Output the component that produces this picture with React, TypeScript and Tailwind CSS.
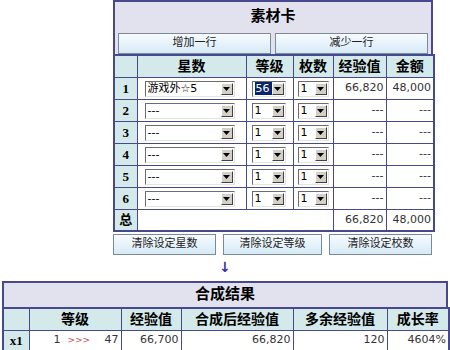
import React from 'react'

const BORDER = 'border border-[#48488c]'
const HEAD = 'bg-[#d3e9ea]'
const cjk = { fontFamily: '"DejaVu Sans", "Noto Sans CJK SC", sans-serif' }
const cjkBold = { fontFamily: '"Liberation Serif", "Noto Sans CJK SC", serif' }

function Select({ value, width, selected = false }: { value: string; width: number; selected?: boolean }) {
	return (
		<div
			className="flex h-[16px] items-center border border-t-[#6d6d6d] border-l-[#6d6d6d] border-r-[#e4e4e4] border-b-[#e4e4e4] bg-white"
			style={{ width }}
		>
			<div className="flex h-full flex-1 items-center overflow-hidden pl-[2px] text-[11px] leading-none text-black" style={cjk}>
				{selected ? <span className="bg-[#0a246a] py-[1px] pl-[1px] pr-[5px] text-white">{value}</span> : value}
			</div>
			<div className="mr-[1px] flex h-[12px] w-[12px] items-center justify-center border border-t-white border-l-white border-r-[#404040] border-b-[#404040] bg-[#d4d0c8]">
				<svg width="7" height="4" viewBox="0 0 7 4">
					<path d="M0 0 H7 L3.5 4 Z" fill="#000" />
				</svg>
			</div>
		</div>
	)
}

function Btn({ label, w }: { label: string; w: number }) {
	return (
		<button
			className="flex h-[21px] items-center justify-center border border-[#7a8a9a] bg-gradient-to-b from-[#f7fbff] to-[#d6eaf6] text-[11px] text-[#222]"
			style={{ width: w, ...cjk }}
		>
			{label}
		</button>
	)
}

const rows = [
	{ n: '1', star: '游戏外☆5', lv: '56', exp: '66,820', gold: '48,000', sel: true },
	{ n: '2', star: '---', lv: '1', exp: '---', gold: '---' },
	{ n: '3', star: '---', lv: '1', exp: '---', gold: '---' },
	{ n: '4', star: '---', lv: '1', exp: '---', gold: '---' },
	{ n: '5', star: '---', lv: '1', exp: '---', gold: '---' },
	{ n: '6', star: '---', lv: '1', exp: '---', gold: '---' },
]

export default function App() {
	return (
		<div className="relative h-[350px] w-[450px] overflow-hidden bg-white">
			<div className="ml-[113px] w-[320px]">
				<table className="w-full border-collapse border-2 border-[#48488c] bg-[#e2e2ee]">
					<tbody>
						<tr className="h-[30px]">
							<td colSpan={6} className="text-center text-[15px] font-bold text-black" style={cjkBold}>
								素材卡
							</td>
						</tr>
						<tr className="h-[24px]">
							<td colSpan={6} className="align-top">
								<div className="flex justify-between px-[3px] pt-[2px]">
									<Btn label="增加一行" w={153} />
									<Btn label="减少一行" w={153} />
								</div>
							</td>
						</tr>
					</tbody>
				</table>
				<table className="-mt-[2px] w-full table-fixed border-collapse border-2 border-[#48488c] bg-white text-black">
					<colgroup>
						<col style={{ width: 23 }} />
						<col style={{ width: 109 }} />
						<col style={{ width: 47 }} />
						<col style={{ width: 40 }} />
						<col style={{ width: 53 }} />
						<col style={{ width: 48 }} />
					</colgroup>
					<tbody>
						<tr className={`h-[22px] ${HEAD} text-[14px] font-bold`} style={cjkBold}>
							<td className={BORDER}></td>
							<td className={`${BORDER} text-center`}>星数</td>
							<td className={`${BORDER} text-center`}>等级</td>
							<td className={`${BORDER} text-center`}>枚数</td>
							<td className={`${BORDER} text-center`}>经验值</td>
							<td className={`${BORDER} text-center`}>金额</td>
						</tr>
						{rows.map((r) => (
							<tr key={r.n} className="h-[22px]">
								<td className={`${BORDER} ${HEAD} text-center text-[13px] font-bold`} style={cjkBold}>
									{r.n}
								</td>
								<td className={`${BORDER} pl-[7px]`}>
									<Select value={r.star} width={90} />
								</td>
								<td className={`${BORDER} pl-[5px]`}>
									<Select value={r.lv} width={34} selected={r.sel} />
								</td>
								<td className={`${BORDER} pl-[4px]`}>
									<Select value="1" width={31} />
								</td>
								<td className={`${BORDER} pr-[2px] text-right text-[11px] text-[#333]`} style={cjk}>
									{r.exp}
								</td>
								<td className={`${BORDER} pr-[2px] text-right text-[11px] text-[#333]`} style={cjk}>
									{r.gold}
								</td>
							</tr>
						))}
						<tr className="h-[21px]">
							<td className={`${BORDER} ${HEAD} text-center text-[13px] font-bold`} style={cjkBold}>
								总
							</td>
							<td className={BORDER} colSpan={3}></td>
							<td className={`${BORDER} pr-[2px] text-right text-[11px] text-[#333]`} style={cjk}>
								66,820
							</td>
							<td className={`${BORDER} pr-[2px] text-right text-[11px] text-[#333]`} style={cjk}>
								48,000
							</td>
						</tr>
					</tbody>
				</table>
				<div className="mt-[2px] flex justify-between pr-[1px]">
					<Btn label="清除设定星数" w={103} />
					<Btn label="清除设定等级" w={99} />
					<Btn label="清除设定校数" w={103} />
				</div>
			</div>
			<div className="ml-[219px] mt-[3px] h-[18px] text-[14px] font-bold leading-[18px] text-[#333399]" style={cjk}>
				↓
			</div>
			<div className="ml-[2px] mt-[5px] w-[446px]">
				<table className="w-full border-collapse border-2 border-[#48488c] bg-[#e2e2ee]">
					<tbody>
						<tr className="h-[26px]">
							<td className="text-center text-[15px] font-bold text-black" style={cjkBold}>
								合成结果
							</td>
						</tr>
					</tbody>
				</table>
				<table className="-mt-[2px] w-full table-fixed border-collapse border-2 border-[#48488c] bg-white text-black">
					<colgroup>
						<col style={{ width: 26 }} />
						<col style={{ width: 92 }} />
						<col style={{ width: 60 }} />
						<col style={{ width: 112 }} />
						<col style={{ width: 94 }} />
						<col style={{ width: 62 }} />
					</colgroup>
					<tbody>
						<tr className={`h-[22px] ${HEAD} text-[14px] font-bold`} style={cjkBold}>
							<td className={BORDER}></td>
							<td className={`${BORDER} text-center`}>等级</td>
							<td className={`${BORDER} text-center`}>经验值</td>
							<td className={`${BORDER} text-center`}>合成后经验值</td>
							<td className={`${BORDER} text-center`}>多余经验值</td>
							<td className={`${BORDER} text-center`}>成长率</td>
						</tr>
						<tr className="h-[21px]">
							<td className={`${BORDER} ${HEAD} text-center text-[13px] font-bold`} style={cjkBold}>
								x1
							</td>
							<td className={`${BORDER} px-[2px] text-[11px] text-[#333]`} style={cjk}>
								<div className="flex items-center">
									<span className="ml-[22px]">1</span>
									<span className="ml-[7px] text-[9px] text-[#c05050]">&gt;&gt;&gt;</span>
									<span className="ml-auto">47</span>
								</div>
							</td>
							<td className={`${BORDER} pr-[2px] text-right text-[11px] text-[#333]`} style={cjk}>
								66,700
							</td>
							<td className={`${BORDER} pr-[2px] text-right text-[11px] text-[#333]`} style={cjk}>
								66,820
							</td>
							<td className={`${BORDER} pr-[2px] text-right text-[11px] text-[#333]`} style={cjk}>
								120
							</td>
							<td className={`${BORDER} pr-[2px] text-right text-[11px] text-[#333]`} style={cjk}>
								4604%
							</td>
						</tr>
						<tr className="h-[21px]">
							<td className={`${BORDER} bg-[#f0c8d8]`}></td>
							<td className={BORDER}></td>
							<td className={BORDER}></td>
							<td className={BORDER}></td>
							<td className={BORDER}></td>
							<td className={BORDER}></td>
						</tr>
					</tbody>
				</table>
			</div>
		</div>
	)
}
